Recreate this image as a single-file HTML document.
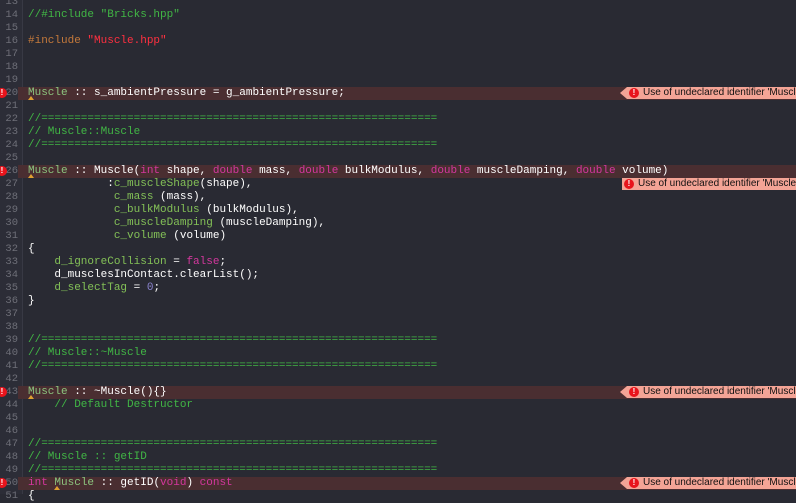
<!DOCTYPE html>
<html><head><meta charset="utf-8"><style>
body{margin:0;width:796px;height:494px;overflow:hidden;background:#292a33;position:relative;font-family:"Liberation Mono",monospace;font-size:11px;}
.gut{position:absolute;left:0;top:0;width:22px;height:494px;background:#2c2d37;border-right:1px solid #383944;}
.ln{position:absolute;left:0;height:13px;width:796px;line-height:13px;white-space:pre;color:#fff;}
.ln.err{background:#4a2e31;}
.num{position:absolute;left:0;width:18px;text-align:right;color:#6e6f78;font-size:10.5px;}
.ln.err .num{background:#2c2d37;width:18px;}
.code{position:absolute;left:28px;}
.m{color:#8cc47e}.c{color:#41b645}.k{color:#d4379e}.n{color:#8b84d0}.p{color:#c4793b}.s{color:#ff3040}.g{color:#83c057}
.dot{position:absolute;left:-3px;top:1px;width:10px;height:10px;border-radius:50%;background:#e8141c;color:#fff;font:bold 8px "Liberation Sans",sans-serif;text-align:center;line-height:10px;}
.caret{position:absolute;top:9px;width:0;height:0;border-left:3px solid transparent;border-right:3px solid transparent;border-bottom:4px solid #e0a030;}
.badge{position:absolute;left:627px;top:0;width:169px;height:12px;background:#f4a496;font:10px "Liberation Sans",sans-serif;color:#111;line-height:12px;white-space:nowrap;overflow:hidden;}
.arrow{position:absolute;left:620px;top:0;width:0;height:0;border-top:6px solid transparent;border-bottom:6px solid transparent;border-right:7px solid #f4a496;}
.bi{position:absolute;left:2px;top:1px;width:10px;height:10px;border-radius:50%;background:#e8141c;color:#fff;font:bold 8px "Liberation Sans",sans-serif;text-align:center;line-height:10px;}
.bt{position:absolute;left:16px;top:0;}
</style></head><body>
<div class="gut"></div>
<div class="ln" style="top:-4px"><span class="num">13</span></div>
<div class="ln" style="top:9px"><span class="num">14</span><span class="code c">//#include "Bricks.hpp"</span></div>
<div class="ln" style="top:22px"><span class="num">15</span></div>
<div class="ln" style="top:35px"><span class="num">16</span><span class="code"><span class="p">#include </span><span class="s">"Muscle.hpp"</span></span></div>
<div class="ln" style="top:48px"><span class="num">17</span></div>
<div class="ln" style="top:61px"><span class="num">18</span></div>
<div class="ln" style="top:74px"><span class="num">19</span></div>
<div class="ln err" style="top:87px"><span class="num">20</span><span class="dot">!</span><span class="code"><span class="m">Muscle</span> :: s_ambientPressure = g_ambientPressure;</span><span class="caret" style="left:28px"></span><span class="arrow"></span><span class="badge"><span class="bi">!</span><span class="bt">Use of undeclared identifier 'Muscle'</span></span></div>
<div class="ln" style="top:100px"><span class="num">21</span></div>
<div class="ln" style="top:113px"><span class="num">22</span><span class="code c">//============================================================</span></div>
<div class="ln" style="top:126px"><span class="num">23</span><span class="code c">// Muscle::Muscle</span></div>
<div class="ln" style="top:139px"><span class="num">24</span><span class="code c">//============================================================</span></div>
<div class="ln" style="top:152px"><span class="num">25</span></div>
<div class="ln err" style="top:165px"><span class="num">26</span><span class="dot">!</span><span class="code"><span class="m">Muscle</span> :: Muscle(<span class="k">int</span> shape, <span class="k">double</span> mass, <span class="k">double</span> bulkModulus, <span class="k">double</span> muscleDamping, <span class="k">double</span> volume)</span><span class="caret" style="left:28px"></span></div>
<div class="ln" style="top:178px"><span class="num">27</span><span class="code">            :<span class="g">c_muscleShape</span>(shape),</span><span class="badge" style="left:622px;width:174px"><span class="bi">!</span><span class="bt">Use of undeclared identifier 'Muscle'</span></span></div>
<div class="ln" style="top:191px"><span class="num">28</span><span class="code">             <span class="g">c_mass</span> (mass),</span></div>
<div class="ln" style="top:204px"><span class="num">29</span><span class="code">             <span class="g">c_bulkModulus</span> (bulkModulus),</span></div>
<div class="ln" style="top:217px"><span class="num">30</span><span class="code">             <span class="g">c_muscleDamping</span> (muscleDamping),</span></div>
<div class="ln" style="top:230px"><span class="num">31</span><span class="code">             <span class="g">c_volume</span> (volume)</span></div>
<div class="ln" style="top:243px"><span class="num">32</span><span class="code">{</span></div>
<div class="ln" style="top:256px"><span class="num">33</span><span class="code">    <span class="g">d_ignoreCollision</span> = <span class="k">false</span>;</span></div>
<div class="ln" style="top:269px"><span class="num">34</span><span class="code">    d_musclesInContact.clearList();</span></div>
<div class="ln" style="top:282px"><span class="num">35</span><span class="code">    <span class="g">d_selectTag</span> = <span class="n">0</span>;</span></div>
<div class="ln" style="top:295px"><span class="num">36</span><span class="code">}</span></div>
<div class="ln" style="top:308px"><span class="num">37</span></div>
<div class="ln" style="top:321px"><span class="num">38</span></div>
<div class="ln" style="top:334px"><span class="num">39</span><span class="code c">//============================================================</span></div>
<div class="ln" style="top:347px"><span class="num">40</span><span class="code c">// Muscle::~Muscle</span></div>
<div class="ln" style="top:360px"><span class="num">41</span><span class="code c">//============================================================</span></div>
<div class="ln" style="top:373px"><span class="num">42</span></div>
<div class="ln err" style="top:386px"><span class="num">43</span><span class="dot">!</span><span class="code"><span class="m">Muscle</span> :: ~Muscle(){}</span><span class="caret" style="left:28px"></span><span class="arrow"></span><span class="badge"><span class="bi">!</span><span class="bt">Use of undeclared identifier 'Muscle'</span></span></div>
<div class="ln" style="top:399px"><span class="num">44</span><span class="code c">    // Default Destructor</span></div>
<div class="ln" style="top:412px"><span class="num">45</span></div>
<div class="ln" style="top:425px"><span class="num">46</span></div>
<div class="ln" style="top:438px"><span class="num">47</span><span class="code c">//============================================================</span></div>
<div class="ln" style="top:451px"><span class="num">48</span><span class="code c">// Muscle :: getID</span></div>
<div class="ln" style="top:464px"><span class="num">49</span><span class="code c">//============================================================</span></div>
<div class="ln err" style="top:477px"><span class="num">50</span><span class="dot">!</span><span class="code"><span class="k">int</span> <span class="m">Muscle</span> :: getID(<span class="k">void</span>) <span class="k">const</span></span><span class="caret" style="left:54px"></span><span class="arrow"></span><span class="badge"><span class="bi">!</span><span class="bt">Use of undeclared identifier 'Muscle'</span></span></div>
<div class="ln" style="top:490px"><span class="num">51</span><span class="code">{</span></div>
</body></html>
